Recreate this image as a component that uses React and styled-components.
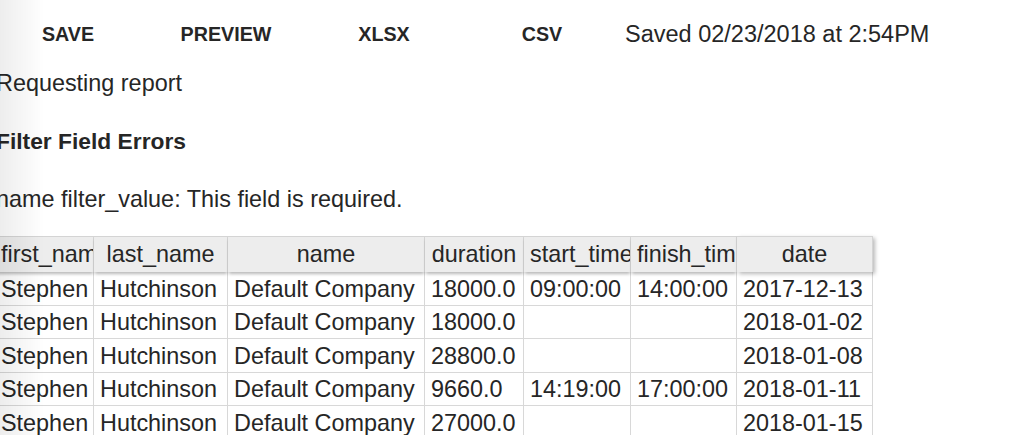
import React from 'react'
import styled, { createGlobalStyle } from 'styled-components'

const GlobalStyle = createGlobalStyle`
  html, body {
    margin: 0;
    padding: 0;
    background: #fff;
    overflow: hidden;
  }
  body {
    font-family: "Liberation Sans", Arial, Helvetica, sans-serif;
    color: #262626;
  }
`

const columns = [
  { key: 'first_name', width: 99 },
  { key: 'last_name', width: 134 },
  { key: 'name', width: 197 },
  { key: 'duration', width: 99 },
  { key: 'start_time', width: 107 },
  { key: 'finish_time', width: 106 },
  { key: 'date', width: 136 },
]

const rows = [
  ['Stephen', 'Hutchinson', 'Default Company', '18000.0', '09:00:00', '14:00:00', '2017-12-13'],
  ['Stephen', 'Hutchinson', 'Default Company', '18000.0', '', '', '2018-01-02'],
  ['Stephen', 'Hutchinson', 'Default Company', '28800.0', '', '', '2018-01-08'],
  ['Stephen', 'Hutchinson', 'Default Company', '9660.0', '14:19:00', '17:00:00', '2018-01-11'],
  ['Stephen', 'Hutchinson', 'Default Company', '27000.0', '', '', '2018-01-15'],
]

function App() {
  return (
    <>
      <GlobalStyle />
      <EdgeShade />
      <Page>
        <Toolbar>
          <ActionButton>SAVE</ActionButton>
          <ActionButton>PREVIEW</ActionButton>
          <ActionButton>XLSX</ActionButton>
          <ActionButton>CSV</ActionButton>
          <SavedAt>Saved 02/23/2018 at 2:54PM</SavedAt>
        </Toolbar>
        <Status>Requesting report</Status>
        <Heading>Filter Field Errors</Heading>
        <ErrorLine>name filter_value: This field is required.</ErrorLine>
        <Report>
          <colgroup>
            {columns.map(c => (
              <col key={c.key} style={{ width: c.width }} />
            ))}
          </colgroup>
          <thead>
            <tr>
              {columns.map((c, i) => (
                <HeadCell key={c.key} last={i === columns.length - 1}>
                  {c.key}
                </HeadCell>
              ))}
            </tr>
          </thead>
          <tbody>
            {rows.map((r, i) => (
              <tr key={i}>
                {r.map((v, j) => (
                  <Cell key={j}>{v}</Cell>
                ))}
              </tr>
            ))}
          </tbody>
        </Report>
      </Page>
    </>
  )
}

export default App


const EdgeShade = styled.div`
    position: fixed;
    top: 0;
    bottom: 0;
    left: 0;
    width: 44px;
    pointer-events: none;
    z-index: 5;
    background: linear-gradient(to right, rgba(0, 0, 0, 0.07), rgba(0, 0, 0, 0));
`

const Page = styled.div`
    margin-left: -4px;
    font-size: 23.4px;
`

const Toolbar = styled.div`
    display: flex;
    align-items: center;
    height: 68px;
    margin-left: -7px;
`

const ActionButton = styled.button`
    width: 158px;
    height: 40px;
    border: none;
    background: transparent;
    font-family: "Liberation Sans", Arial, sans-serif;
    font-weight: bold;
    font-size: 19.7px;
    color: #262626;
    padding: 0;
    cursor: pointer;
`

const SavedAt = styled.span`
    margin-left: 4px;
    font-size: 23.5px;
    color: #262626;
`

const Status = styled.p`
    margin: 2px 0 0;
    line-height: 26px;
`

const Heading = styled.h3`
    margin: 32px 0 0;
    font-size: 22.8px;
    font-weight: bold;
    line-height: 26px;
`

const ErrorLine = styled.p`
    margin: 32px 0 0;
    line-height: 26px;
`

const Report = styled.table`
    margin-top: 24px;
    margin-left: -1px;
    table-layout: fixed;
    width: 878px;
    border-collapse: separate;
    border-spacing: 0;
    font-size: 23.4px;
    color: #262626;
`

const HeadCell = styled.th`
    position: relative;
    z-index: 1;
    height: 36px;
    padding: 0 6px;
    font-weight: normal;
    text-align: center;
    white-space: nowrap;
    overflow: hidden;
    background: #ededed;
    border-top: 1px solid #d4d4d4;
    border-right: 1px solid #d4d4d4;
    box-sizing: border-box;
    box-shadow: ${p => p.last
      ? '2px 2px 4px rgba(0, 0, 0, 0.28)'
      : '0 3px 3px -1px rgba(0, 0, 0, 0.28)'};
`

const Cell = styled.td`
    height: 33.5px;
    padding: 1px 6px 0;
    line-height: 26px;
    white-space: nowrap;
    overflow: hidden;
    border-right: 1px solid #d8d8d8;
    border-bottom: 1px solid #d8d8d8;
    box-sizing: border-box;
`
